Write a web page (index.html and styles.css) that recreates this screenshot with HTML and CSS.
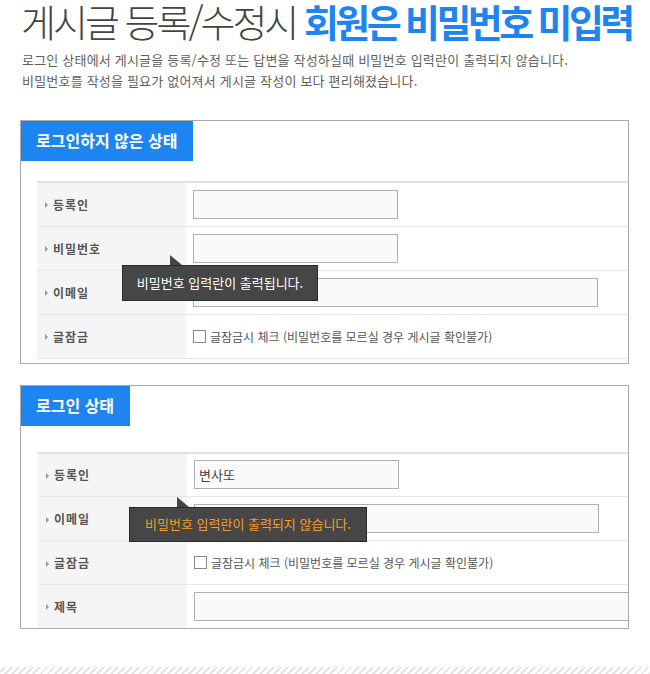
FILE: index.html
```html
<!DOCTYPE html>
<html lang="ko">
<head>
    <meta charset="UTF-8">
    <meta name="viewport" content="width=device-width, initial-scale=1.0">
    <title>게시글 등록/수정시 회원은 비밀번호 미입력</title>
    <link rel="stylesheet" href="styles.css">
</head>
<body>
    <div class="page">
        <h1 class="title">게시글 등록/수정시 <strong>회원은 비밀번호 미입력</strong></h1>

        <p class="desc">로그인 상태에서 게시글을 등록/수정 또는 답변을 작성하실때 비밀번호 입력란이 출력되지 않습니다.<br>
        비밀번호를 작성을 필요가 없어져서 게시글 작성이 보다 편리해졌습니다.</p>

        <section class="panel panel-guest">
            <h2 class="tab">로그인하지 않은 상태</h2>
            <table class="form">
                <tr>
                    <th>등록인</th>
                    <td><span class="input short"></span></td>
                </tr>
                <tr>
                    <th>비밀번호</th>
                    <td><span class="input short"></span></td>
                </tr>
                <tr>
                    <th>이메일</th>
                    <td><span class="input long"></span></td>
                </tr>
                <tr>
                    <th>글잠금</th>
                    <td><label class="check"><span class="box"></span>글잠금시 체크 (비밀번호를 모르실 경우 게시글 확인불가)</label></td>
                </tr>
            </table>
            <div class="tip tip-guest">비밀번호 입력란이 출력됩니다.</div>
        </section>

        <section class="panel panel-member">
            <h2 class="tab">로그인 상태</h2>
            <table class="form">
                <tr>
                    <th>등록인</th>
                    <td><span class="input short">변사또</span></td>
                </tr>
                <tr>
                    <th>이메일</th>
                    <td><span class="input long"></span></td>
                </tr>
                <tr>
                    <th>글잠금</th>
                    <td><label class="check"><span class="box"></span>글잠금시 체크 (비밀번호를 모르실 경우 게시글 확인불가)</label></td>
                </tr>
                <tr>
                    <th>제목</th>
                    <td><span class="input full"></span></td>
                </tr>
            </table>
            <div class="tip tip-member">비밀번호 입력란이 출력되지 않습니다.</div>
        </section>
    </div>
    <div class="hatch"></div>
</body>
</html>
```

FILE: styles.css
```css
body {
    margin: 0;
    font-family: "Noto Sans CJK KR", "Noto Sans", sans-serif;
    color: #555;
    background: #fff;
}
.page {
    padding: 0 21px 0 20px;
}
.title {
    margin: 0;
    padding-left: 1px;
    font-size: 38px;
    line-height: 42px;
    font-weight: 300;
    letter-spacing: -3px;
    color: #444;
    white-space: nowrap;
}
.title strong {
    font-weight: 700;
    color: #1d84f0;
    letter-spacing: -3.6px;
}
.desc {
    margin: 7px 0 0;
    padding-left: 2px;
    font-size: 13px;
    line-height: 21px;
    color: #5f5f5f;
    letter-spacing: 0.2px;
    white-space: nowrap;
}
.panel {
    position: relative;
    border: 1px solid #aaa;
    margin-top: 29px;
    overflow: hidden;
}
.panel-member {
    margin-top: 21px;
}
.tab {
    display: inline-block;
    margin: -1px 0 0 -1px;
    padding: 0 16px;
    height: 41px;
    line-height: 40px;
    background: #1d84f0;
    color: #fff;
    font-size: 16px;
    font-weight: 700;
}
.form {
    border-collapse: collapse;
    table-layout: fixed;
    width: calc(100% - 16px);
    margin: 20px 0 4px 16px;
    border-top: 2px solid #e2e2e2;
}
.panel-member .form {
    margin: 26px 0 0 17px;
    width: calc(100% - 17px);
}
.form tr {
    height: 44px;
    border-bottom: 1px solid #e7e7e7;
}
.panel-member .form tr:last-child {
    border-bottom: 0;
    height: 43px;
}
.form th {
    width: 141px;
    padding: 0 0 0 8px;
    background: #f5f5f5;
    text-align: left;
    font-size: 12px;
    font-weight: 700;
    color: #555;
    letter-spacing: 1px;
}
.form th::before {
    content: "";
    display: inline-block;
    vertical-align: middle;
    margin: -2px 5px 0 0;
    border-left: 3px solid #999;
    border-top: 3px solid transparent;
    border-bottom: 3px solid transparent;
}
.form td {
    padding: 0 0 0 7px;
    vertical-align: middle;
}
.input {
    display: block;
    box-sizing: border-box;
    height: 29px;
    border: 1px solid #b0b0b0;
    background: #fafafa;
    font-size: 13px;
    line-height: 27px;
    padding-left: 4px;
    color: #444;
}
.short {
    width: 205px;
}
.long {
    width: 405px;
}
.full {
    width: 440px;
}
.check {
    display: flex;
    align-items: center;
    font-size: 12px;
    color: #555;
}
.box {
    width: 11px;
    height: 11px;
    border: 1px solid #888;
    background: #fff;
    margin-right: 4px;
}
.tip {
    position: absolute;
    box-sizing: border-box;
    border: 1px solid #2a2a2a;
    background: #464646;
    font-size: 13px;
    text-align: center;
}
.tip::before {
    content: "";
    position: absolute;
    top: -11px;
    left: 47px;
    border-bottom: 10px solid #464646;
    border-right: 12px solid transparent;
}
.tip-guest {
    top: 144px;
    left: 101px;
    width: 196px;
    height: 36px;
    line-height: 33px;
    color: #fff;
}
.tip-member {
    top: 121px;
    left: 108px;
    width: 238px;
    height: 35px;
    line-height: 32px;
    color: #f39c2a;
}
.hatch {
    margin-top: 38px;
    height: 7px;
    background: repeating-linear-gradient(-45deg, #e4e4e4 0 2px, #fff 2px 5px);
}
```
